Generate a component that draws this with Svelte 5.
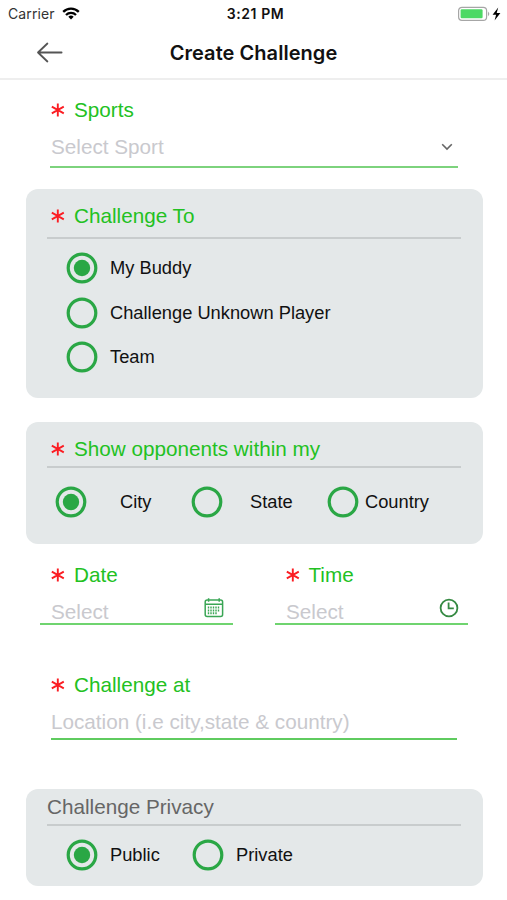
<script>
    let challengeTo = $state('My Buddy');
    let within = $state('City');
    let privacy = $state('Public');

    const opponents = ['My Buddy', 'Challenge Unknown Player', 'Team'];
    const areas = ['City', 'State', 'Country'];
    const privacies = ['Public', 'Private'];
</script>

{#snippet label(text)}
    <div class="label">
        <svg class="star" width="14" height="16" viewBox="0 0 14 16" fill="none" stroke="#fb1d23" stroke-width="1.9">
            <path d="M6.8 1.6v12.8M.8 4.7l12 6.6M.8 11.3l12-6.6" />
        </svg>
        <span>{text}</span>
    </div>
{/snippet}

{#snippet radio(text, checked, select)}
    <button class="radio" onclick={select}>
        <svg width="32" height="32" viewBox="0 0 32 32">
            <circle cx="16" cy="16" r="13.8" fill="none" stroke="#2aa745" stroke-width="3.2" />
            {#if checked}
                <circle cx="16" cy="16" r="8.2" fill="#2aa745" />
            {/if}
        </svg>
        <span>{text}</span>
    </button>
{/snippet}

<div class="screen">
    <div class="status">
        <div class="carrier">
            <span>Carrier</span>
            <svg width="18" height="13" viewBox="0 0 18 13" fill="none" stroke="#000" stroke-width="2.3">
                <path d="M1.2 4.9a11 11 0 0 1 15.6 0" />
                <path d="M4 8a7.1 7.1 0 0 1 10 0" />
                <path d="M9 12.4L6.3 9.8a3.9 3.9 0 0 1 5.4 0z" fill="#000" stroke="none" />
            </svg>
        </div>
        <div class="time">3:21 PM</div>
        <div class="battery">
            <svg width="45" height="16" viewBox="0 0 45 16">
                <rect x="0.6" y="1.3" width="28" height="13" rx="3.4" fill="#fff" stroke="#a6a6a6" stroke-width="1.2" />
                <rect x="2.6" y="3.3" width="22" height="9" rx="1.2" fill="#4cd964" />
                <path d="M30 5.4q2.6 2.4 0 4.8z" fill="#a6a6a6" />
                <path d="M40.2 1.6L34.6 8.8h3.5l-1.5 5.6 5.8-7.4h-3.7z" fill="#000" />
            </svg>
        </div>
    </div>

    <header>
        <svg class="back" width="28" height="22" viewBox="0 0 28 22" fill="none" stroke="#555" stroke-width="1.8" stroke-linecap="round" stroke-linejoin="round">
            <path d="M25.6 10.5H2M11.4 1.5L2 10.5l9.4 9" />
        </svg>
        <h1>Create Challenge</h1>
    </header>

    <section class="field sports">
        {@render label('Sports')}
        <div class="input">
            <span>Select Sport</span>
            <svg width="12" height="8" viewBox="0 0 12 8" fill="none" stroke="#666" stroke-width="1.6">
                <path d="M1.2 1.3L6 6.1l4.8-4.8" />
            </svg>
        </div>
    </section>

    <section class="card to">
        {@render label('Challenge To')}
        <div class="options">
            {#each opponents as o}
                {@render radio(o, challengeTo === o, () => (challengeTo = o))}
            {/each}
        </div>
    </section>

    <section class="card within">
        {@render label('Show opponents within my')}
        <div class="options">
            {#each areas as a}
                {@render radio(a, within === a, () => (within = a))}
            {/each}
        </div>
    </section>

    <section class="when">
        <div class="field">
            {@render label('Date')}
            <div class="input">
                <span>Select</span>
                <svg class="icon" width="20" height="20" viewBox="0 0 20 20" fill="none" stroke="#3aa655" stroke-width="1.5">
                    <rect x="1.2" y="2" width="17.4" height="16.6" rx="2" />
                    <path d="M1.2 6.2h17.4M4.6 .2v3.6M15.2 .2v3.6" />
                    <path d="M3.8 9.6h12.4M3.8 12.4h12.4M3.8 15.2h9.4" stroke-width="2" stroke-dasharray="1.4 1.1" />
                </svg>
            </div>
        </div>
        <div class="field">
            {@render label('Time')}
            <div class="input">
                <span>Select</span>
                <svg class="icon" width="20" height="20" viewBox="0 0 20 20" fill="none" stroke="#368a43" stroke-width="1.8">
                    <circle cx="10" cy="10" r="8.4" />
                    <path d="M9.6 4.6v5.8h5.2" />
                </svg>
            </div>
        </div>
    </section>

    <section class="field place">
        {@render label('Challenge at')}
        <div class="input">
            <span>Location (i.e city,state &amp; country)</span>
        </div>
    </section>

    <section class="card privacy">
        <div class="label plain">Challenge Privacy</div>
        <div class="options">
            {#each privacies as p}
                {@render radio(p, privacy === p, () => (privacy = p))}
            {/each}
        </div>
    </section>
</div>

<style>
    :global(body) {
        background: #fff;
    }

    .screen {
        width: 507px;
        height: 900px;
        overflow: hidden;
        font-family: "Liberation Sans", Arial, sans-serif;
        color: #111;
    }

    .status {
        display: grid;
        grid-template-columns: 1fr auto 1fr;
        align-items: center;
        height: 27px;
        padding: 0 4px 0 8px;
        font-family: Inter, sans-serif;
        font-size: 14px;
    }

    .carrier {
        display: flex;
        align-items: center;
        gap: 7px;
        color: #333;
        letter-spacing: 0.1px;
    }

    .time {
        font-weight: 600;
        letter-spacing: 0.6px;
    }

    .battery {
        display: flex;
        justify-content: flex-end;
    }

    header {
        display: grid;
        grid-template-columns: 1fr auto 1fr;
        align-items: center;
        height: 51px;
        border-bottom: 2px solid #eee;
    }

    .back {
        margin-left: 36px;
    }

    h1 {
        margin: 0;
        font-family: Inter, sans-serif;
        font-size: 20px;
        font-weight: 600;
        letter-spacing: 0.05px;
        color: #111;
    }

    .label {
        display: flex;
        align-items: center;
        height: 30px;
        font-size: 20.7px;
        white-space: nowrap;
        color: #22c122;
    }

    .star {
        margin-right: 9px;
    }

    .input {
        display: flex;
        align-items: center;
        justify-content: space-between;
        box-sizing: border-box;
        border-bottom: 2px solid #7dd37d;
        font-size: 20.7px;
        color: #c9c9ce;
    }

    .sports {
        margin: 15px 49px 0 50px;
    }

    .sports .input {
        height: 43px;
        padding: 3px 5px 0 1px;
    }

    .sports .label {
        padding-left: 1px;
    }

    .card {
        box-sizing: border-box;
        margin: 0 24.5px 0 25.5px;
        padding: 0 21.5px;
        border-radius: 12px;
        background: #e4e8e9;
    }

    .card .label {
        padding-left: 4px;
        border-bottom: 2px solid #c8cccd;
    }

    .radio {
        display: flex;
        align-items: center;
        padding: 0;
        border: 0;
        background: none;
        font: inherit;
        font-size: 18.3px;
        color: #111;
        white-space: nowrap;
    }

    .radio span {
        margin-left: 12px;
    }

    .to {
        height: 209px;
        margin-top: 21px;
        padding-top: 12px;
    }

    .to .label {
        padding-bottom: 6px;
    }

    .to .options {
        display: flex;
        flex-direction: column;
        align-items: flex-start;
        gap: 12.5px;
        padding: 13px 0 0 19px;
    }

    .within {
        height: 122px;
        margin-top: 24px;
        padding-top: 12px;
    }

    .within .label {
        padding-bottom: 2px;
    }

    .within .options {
        display: grid;
        grid-template-columns: 136px 136px auto;
        padding: 18px 0 0 8px;
    }

    .within .radio span {
        margin-left: 33px;
    }

    .within .radio:nth-child(2) span {
        margin-left: 27px;
    }

    .within .radio:last-child span {
        margin-left: 6px;
    }

    .when {
        display: grid;
        grid-template-columns: 193px 193px;
        gap: 42px;
        padding: 16px 0 0 40px;
    }

    .when .label {
        padding-left: 11px;
    }

    .when .field:last-child .label {
        padding-left: 10.5px;
    }

    .when .input {
        height: 35px;
        padding: 2px 9px 0 11px;
        border-bottom-color: #6fd46f;
    }

    .when .input span {
        padding-top: 8px;
    }

    .place {
        margin: 45px 50px 0 51px;
    }

    .place .input {
        height: 40px;
        padding-top: 5px;
        border-bottom-color: #5fcb5f;
    }

    .privacy {
        height: 97px;
        margin-top: 49px;
        padding-top: 1px;
    }

    .privacy .plain {
        height: 34px;
        padding-left: 0;
        color: #666;
    }

    .privacy .options {
        display: grid;
        grid-template-columns: 126px auto;
        padding: 13px 0 0 19px;
    }
</style>
